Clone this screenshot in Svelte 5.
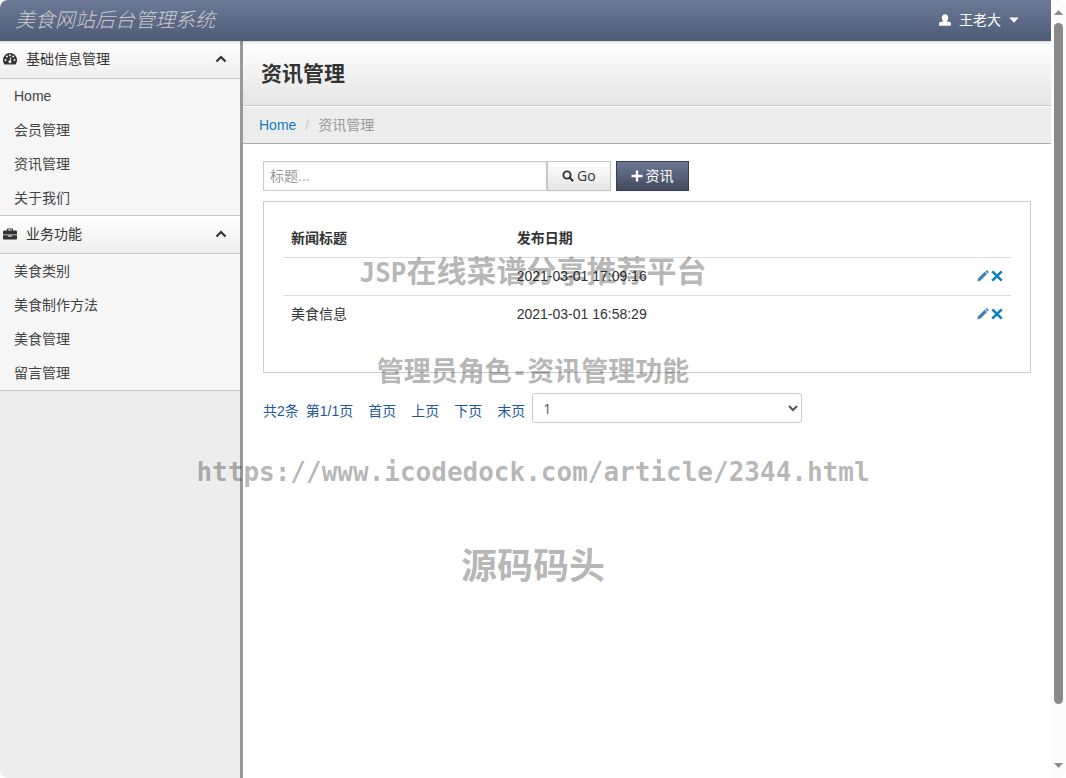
<script>
	let keyword = "";
	let page = "1";

	const groups = [
		{
			title: "基础信息管理",
			icon: "dashboard",
			open: true,
			items: ["Home", "会员管理", "资讯管理", "关于我们"],
		},
		{
			title: "业务功能",
			icon: "briefcase",
			open: true,
			items: ["美食类别", "美食制作方法", "美食管理", "留言管理"],
		},
	];

	const news = [
		{ title: "", date: "2021-03-01 17:09:16" },
		{ title: "美食信息", date: "2021-03-01 16:58:29" },
	];

	const pages = ["首页", "上页", "下页", "末页"];
</script>

<div class="window">
	<div class="app">
		<header class="navbar">
			<a class="brand" href="#home">美食网站后台管理系统</a>
			<button class="user" type="button">
				<svg width="12" height="12" viewBox="0 0 12 12">
					<path d="M6 0.3c2 0 3.200 1.300 3.200 3.200 0 1.500-.6 2.700-1.300 3.300v.4l2.800.8c.9.3 1.300.9 1.300 1.800v1.300q0 .7-.7.7H.7Q0 11.700 0 11V9.800c0-.9.400-1.500 1.300-1.800l2.800-.8v-.4C3.400 6.200 2.800 5 2.800 3.500 2.800 1.600 4 .3 6 .3z" />
				</svg>
				<span>王老大</span>
				<svg class="caret" width="10" height="6" viewBox="0 0 10 6">
					<path d="M.3.5h9.400L5 5.700z" />
				</svg>
			</button>
		</header>

		<div class="body">
			<nav class="sidebar">
				{#each groups as group}
					<button class="group" type="button" on:click={() => (group.open = !group.open)}>
						<svg width="14" height="14" viewBox="0 0 14 14">
							{#if group.icon === "dashboard"}
								<path d="M7 1a7 7 0 0 1 5.800 10.900q-.3.500-.9.500H2.100q-.6 0-.9-.500A7 7 0 0 1 7 1z" />
								<g fill="#f8f8f8">
									<circle cx="2.500" cy="8" r="1" />
									<circle cx="3.900" cy="4.600" r="1" />
									<circle cx="7" cy="3.200" r="1" />
									<circle cx="10.200" cy="4.600" r="1" />
									<circle cx="11.500" cy="8" r="1" />
									<path d="M7.400 5.200l.9.300-.6 2.900a1.500 1.500 0 1 1-1-.2z" />
								</g>
							{:else}
								<path d="M4 3.500V2.300Q4 1.500 4.800 1.500h4.400q.8 0 .8.800v1.200h2.700Q14 3.500 14 4.800v2.700H0V4.800Q0 3.500 1.300 3.500zM5 3.500h4v-1H5zM0 8.200h5.500v1.500h3V8.200H14v3.200q0 1.100-1.100 1.100H1.100Q0 12.500 0 11.400zM6.300 8.200h1.400v.8H6.300z" fill-rule="evenodd" />
							{/if}
						</svg>
						<span>{group.title}</span>
						<svg class="arrow" class:closed={!group.open} width="12" height="8" viewBox="0 0 12 8">
							<path d="M1.500 6.500L6 2l4.500 4.500" fill="none" stroke="#333" stroke-width="2.200" />
						</svg>
					</button>
					{#if group.open}
						<ul>
							{#each group.items as item}
								<li><a href="#{item}">{item}</a></li>
							{/each}
						</ul>
					{/if}
				{/each}
			</nav>

			<main>
				<h1>资讯管理</h1>
				<div class="breadcrumb">
					<a href="#home">Home</a>
					<span class="divider">/</span>
					<span>资讯管理</span>
				</div>

				<div class="content">
					<form class="search" on:submit|preventDefault>
						<input type="text" placeholder="标题..." aria-label="标题" bind:value={keyword} />
						<button class="btn" type="submit">
							<svg width="12" height="12" viewBox="0 0 12 12">
								<circle cx="5" cy="5" r="3.600" fill="none" stroke="#333" stroke-width="1.900" />
								<path d="M7.800 7.800l2.700 2.700" stroke="#333" stroke-width="2.300" stroke-linecap="round" />
							</svg>
							Go
						</button>
						<button class="btn primary" type="button">
							<svg width="12" height="12" viewBox="0 0 12 12">
								<path d="M6 .5v11M.5 6h11" stroke="#fff" stroke-width="2.400" />
							</svg>
							资讯
						</button>
					</form>

					<div class="well">
						<table>
							<thead>
								<tr>
									<th class="name">新闻标题</th>
									<th>发布日期</th>
									<th class="tools"></th>
								</tr>
							</thead>
							<tbody>
								{#each news as row}
									<tr>
										<td>{row.title}</td>
										<td>{row.date}</td>
										<td class="tools">
											<div>
												<a href="#edit" aria-label="编辑">
													<svg width="12" height="12" viewBox="0 0 12 12">
														<path d="M.3 11.500l.9-3.300 6.500-6.400 2.300 2.300-6.500 6.500zM8.400 1.200l.9-.8q.5-.4 1 .1l1.100 1.100q.5.500.1 1l-.9.900z" />
													</svg>
												</a>
												<a href="#delete" aria-label="删除">
													<svg width="12" height="12" viewBox="0 0 12 12">
														<path d="M1.300 1.300l9.400 9.400M10.700 1.300l-9.400 9.400" stroke="#0d7fbf" stroke-width="2.600" />
													</svg>
												</a>
											</div>
										</td>
									</tr>
								{/each}
							</tbody>
						</table>
					</div>

					<div class="pager">
						<span>共2条</span>
						<div class="links">
							<span>第1/1页</span>
							{#each pages as label}
								<a href="#page">{label}</a>
							{/each}
						</div>
						<select aria-label="页码" bind:value={page}>
							<option value="1">1</option>
						</select>
					</div>
				</div>
			</main>
		</div>
	</div>

	<div class="scrollbar">
		<svg width="9" height="5" viewBox="0 0 9 5"><path d="M0 5L4.500 0 9 5z" /></svg>
		<div class="track"><div class="thumb"></div></div>
		<svg width="9" height="5" viewBox="0 0 9 5"><path d="M0 0h9L4.500 5z" /></svg>
	</div>

	<div class="watermark">
		<p class="first"><span>JSP</span>在线菜谱分享推荐平台</p>
		<p class="second">管理员角色<span>-</span>资讯管理功能</p>
		<p class="url">https://www.icodedock.com/article/2344.html</p>
		<p class="last">源码码头</p>
	</div>
</div>

<style>
	:global(body) {
		background: #fff;
	}

	.window {
		position: relative;
		display: flex;
		min-height: 100vh;
		font: 14px/20px "Liberation Sans", "Noto Sans CJK SC", sans-serif;
		color: #333;
	}

	.window * {
		box-sizing: border-box;
	}

	a {
		color: #0d7fbf;
		text-decoration: none;
	}

	button,
	input,
	select {
		margin: 0;
		font: inherit;
		color: inherit;
	}

	button {
		cursor: pointer;
	}

	.app {
		flex: 1;
		display: flex;
		flex-direction: column;
		border-radius: 8px 0 0 8px;
		overflow: hidden;
	}

	.navbar {
		position: relative;
		display: flex;
		align-items: center;
		justify-content: space-between;
		height: 41px;
		padding: 0 32px 2px 15px;
		background: linear-gradient(#6c7a98, #4e5a76);
		box-shadow: 0 1px 3px rgba(78, 90, 118, 0.3);
	}

	.brand {
		font-size: 20px;
		font-style: italic;
		font-weight: 300;
		color: #ccc;
	}

	.user {
		display: flex;
		align-items: center;
		gap: 8px;
		padding: 0;
		border: 0;
		background: none;
		color: #fff;
		fill: #fff;
	}

	.body {
		flex: 1;
		display: flex;
	}

	.sidebar {
		width: 243px;
		border-right: 3px solid #999;
		background: #ededed;
	}

	.group {
		display: flex;
		align-items: center;
		gap: 9px;
		width: 100%;
		height: 38px;
		padding: 0 13px 2px 3px;
		border: 0;
		border-bottom: 1px solid #c8c8c8;
		background: linear-gradient(#fff, #eee);
		fill: #333;
	}

	.arrow {
		margin-left: auto;
	}

	.closed {
		transform: rotate(180deg);
	}

	ul {
		margin: 0;
		padding: 0;
		border-bottom: 1px solid #c8c8c8;
		background: #f6f6f6;
		list-style: none;
	}

	li a {
		display: block;
		padding: 7px 14px;
		color: #444;
	}

	main {
		flex: 1;
		background: #fff;
	}

	h1 {
		margin: 0;
		padding: 19px 18px 17px;
		height: 65px;
		border-bottom: 1px solid #c8c8c8;
		background: linear-gradient(#fff, #e5e5e5);
		font-size: 21px;
		line-height: 28px;
	}

	.breadcrumb {
		display: flex;
		gap: 9px;
		padding: 9px 16px 8px;
		border-bottom: 1px solid #aaa;
		background: #ededed;
		box-shadow: inset 0 1px #fff;
		color: #999;
	}

	.divider {
		color: #ccc;
	}

	.content {
		padding: 17px 20px;
	}

	.search {
		display: flex;
		height: 30px;
	}

	input {
		width: 284px;
		padding: 0 6px;
		border: 1px solid #ccc;
		outline: none;
		box-shadow: inset 0 1px 2px rgba(0, 0, 0, 0.08);
	}

	input::placeholder {
		color: #999;
	}

	.btn {
		display: flex;
		align-items: center;
		gap: 3px;
		padding: 0 14px;
		border: 1px solid #c5c5c5;
		background: linear-gradient(#fff, #e5e5e5);
		box-shadow: 0 1px 2px rgba(0, 0, 0, 0.05);
		font-family: "Open Sans", "Noto Sans CJK SC", sans-serif;
	}

	.primary {
		margin-left: 5px;
		border-color: #363f50;
		background: linear-gradient(#6b7793, #414a5c);
		color: #fff;
	}

	.well {
		margin: 10px 0 20px;
		padding: 18px 19px 39px;
		border: 1px solid #ccc;
	}

	table {
		width: 100%;
		border-collapse: collapse;
	}

	th,
	td {
		height: 38px;
		padding: 0 8px;
		text-align: left;
	}

	th {
		height: 37px;
	}

	td {
		border-top: 1px solid #ddd;
	}

	.name {
		width: 31%;
	}

	.tools {
		width: 60px;
	}

	.tools div {
		display: flex;
		justify-content: flex-end;
		gap: 2px;
	}

	.tools svg {
		display: block;
		fill: #3d82b5;
	}

	.pager {
		display: flex;
		align-items: center;
		gap: 7px;
		color: #1d5a9c;
	}

	.links {
		display: flex;
		gap: 15px;
	}

	.pager span,
	.pager a {
		padding-top: 5px;
		color: #1d5a9c;
	}

	select {
		width: 270px;
		height: 30px;
		padding: 0 6px;
		border: 1px solid #ccc;
		border-radius: 3px;
		background: #fff;
		color: #555;
		font-family: "Open Sans", sans-serif;
	}

	.scrollbar {
		display: flex;
		flex-direction: column;
		align-items: center;
		width: 15px;
		padding: 10px 0;
		background: #fcfcfc;
		border-radius: 0 8px 8px 0;
		fill: #8a8a8a;
	}

	.track {
		flex: 1;
		width: 9px;
		padding: 8px 0;
	}

	.thumb {
		height: 93%;
		border-radius: 5px;
		background: #8a8a8a;
	}

	.watermark {
		position: absolute;
		inset: 0;
		padding-top: 222px;
		color: rgba(0, 0, 0, 0.3);
		font-weight: bold;
		line-height: 100px;
		text-align: center;
		pointer-events: none;
	}

	.watermark p {
		height: 100px;
		margin: 0;
	}

	.watermark span,
	.watermark .url {
		font-family: "DejaVu Sans Mono", monospace;
	}

	.watermark .first {
		font-size: 30px;
	}

	.watermark span,
	.watermark .url {
		font-size: 26px;
	}

	.watermark .second {
		font-size: 27px;
	}

	.watermark .last {
		font-size: 36px;
		line-height: 90px;
	}
</style>
